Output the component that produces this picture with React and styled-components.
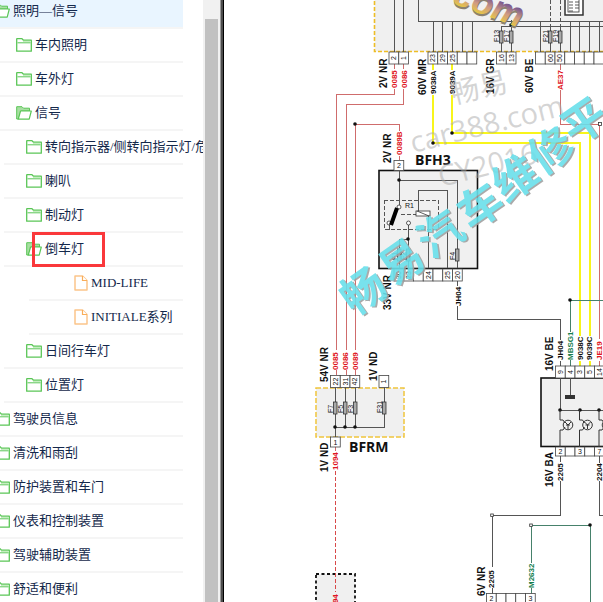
import React from "react";
import styled, { createGlobalStyle } from "styled-components";

const GlobalStyle = createGlobalStyle`
  * { box-sizing: border-box; }
  html, body, #root { height: 100%; }
  body { margin: 0; background: #fff; overflow: hidden; }
`;

const Page = styled.div`
  display: flex;
  height: 100vh;
  overflow: hidden;
`;

const Sidebar = styled.nav`
  flex: 0 0 203px;
  overflow: hidden;
`;

const Tree = styled.ul`
  list-style: none;
  margin: -5px 20px 0 0;
  padding: 0;
`;

const indents = [0, 0, 4, 29];
const iconStarts = [-6, 16, 22, 45];

const Item = styled.li`
  position: relative;
  height: 34px;
  margin-left: ${(p) => indents[p.$level]}px;
  border-bottom: 2px solid #f5f5f5;
  background: ${(p) => (p.$selected ? "#e9f5ff" : "transparent")};
`;

const ItemButton = styled.button`
  display: flex;
  align-items: center;
  gap: 3px;
  height: 31px;
  margin-left: ${(p) => iconStarts[p.$level]}px;
  padding: 0;
  border: 0;
  background: none;
  color: #14284b;
  font: 13px/18px "Liberation Serif", "Noto Sans CJK SC", serif;
  white-space: nowrap;
  cursor: pointer;
  svg { flex: none; }
`;

const Highlight = styled.span`
  position: absolute;
  left: 28px;
  top: -1px;
  width: 73px;
  height: 35px;
  border: 3px solid #fa383b;
  pointer-events: none;
`;

const Rail = styled.div`
  flex: 0 0 17px;
  display: flex;
  padding: 19px 2px 0;
  background: #f1f1f1;
`;

const Thumb = styled.div`
  flex: 1;
  background: #c1c1c1;
`;

const Divider = styled.div`
  flex: 0 0 4px;
  border-left: 1px solid #999;
  border-right: 1px solid #000;
  background: #4c4c4c;
`;

const Viewer = styled.main`
  flex: 1;
  min-width: 0;
  overflow: hidden;
  background: #fff;
`;

const Diagram = styled.svg`
  display: block;
  font-family: "Liberation Sans", sans-serif;
`;

const Wires = styled.g`
  fill: none;
  stroke: ${(p) => p.$color};
  stroke-width: ${(p) => p.$width || 1}px;
  shape-rendering: crispEdges;
`;

const Label = styled.text`
  font-size: ${(p) => p.$size}px;
  font-weight: ${(p) => (p.$bold ? 700 : 400)};
  fill: ${(p) => p.$color || "#111"};
`;

const BlockName = styled.text`
  font: 700 14px "Open Sans", sans-serif;
  fill: #111;
`;

const GreyMark = styled.text`
  font-family: "Open Sans", "Noto Sans CJK SC", sans-serif;
  font-size: ${(p) => p.$size}px;
  fill: #aaa;
  fill-opacity: 0.5;
`;

const BlueMark = styled.text`
  font: 700 44px "Noto Sans CJK SC", sans-serif;
  text-anchor: middle;
`;

const LogoText = styled.text`
  font: italic 700 35px "Liberation Sans", sans-serif;
`;

function ClosedFolder() {
  return (
    <svg width="16" height="14" viewBox="0 0 16 14" aria-hidden="true">
      <path d="M0.7 13.2V1.2Q0.7 0.7 1.2 0.7H6L7.5 2.2H15.3V13.2Z" fill="#fff" stroke="#5bc657" strokeWidth="1.3" strokeLinejoin="round" />
      <path d="M1.5 4.8H14.5" stroke="#5bc657" strokeWidth="1" />
      <path d="M7 3.5H14.5" stroke="#c5eec0" strokeWidth="1" />
    </svg>
  );
}

function OpenFolder() {
  return (
    <svg width="16" height="14" viewBox="0 0 16 14" aria-hidden="true">
      <path d="M0.7 13V0.7H6L7.5 2.2H13.5V5H5L2.5 13Z" fill="#a8dfa2" stroke="#5bc657" strokeLinejoin="round" />
      <path d="M4.5 5H15.3L13.2 13.2H2.3Z" fill="#fff" stroke="#5bc657" strokeWidth="1.2" strokeLinejoin="round" />
    </svg>
  );
}

function FileIcon() {
  return (
    <svg width="14" height="16" viewBox="0 0 14 16" aria-hidden="true">
      <path d="M1 1H8.5L13 5.5V15H1Z" fill="#fff" stroke="#fbc58a" strokeWidth="1.5" strokeLinejoin="round" />
      <path d="M8.5 1V5.5H13" fill="#fff" stroke="#f9ad59" strokeWidth="1.2" />
    </svg>
  );
}

const icons = { closed: ClosedFolder, open: OpenFolder, file: FileIcon };

const items = [
  { text: "照明—信号", level: 0, icon: "open", selected: true },
  { text: "车内照明", level: 1, icon: "closed" },
  { text: "车外灯", level: 1, icon: "closed" },
  { text: "信号", level: 1, icon: "open" },
  { text: "转向指示器/侧转向指示灯/危", level: 2, icon: "closed" },
  { text: "喇叭", level: 2, icon: "closed" },
  { text: "制动灯", level: 2, icon: "closed" },
  { text: "倒车灯", level: 2, icon: "open", marked: true },
  { text: "MID-LIFE", level: 3, icon: "file" },
  { text: "INITIALE系列", level: 3, icon: "file" },
  { text: "日间行车灯", level: 2, icon: "closed" },
  { text: "位置灯", level: 2, icon: "closed" },
  { text: "驾驶员信息", level: 0, icon: "closed" },
  { text: "清洗和雨刮", level: 0, icon: "closed" },
  { text: "防护装置和车门", level: 0, icon: "closed" },
  { text: "仪表和控制装置", level: 0, icon: "closed" },
  { text: "驾驶辅助装置", level: 0, icon: "closed" },
  { text: "舒适和便利", level: 0, icon: "closed" },
];

/* Text that reads upward, starting at (x, y). */
function Up({ x, y, size = 8, bold = true, color, children }) {
  return (
    <Label $size={size} $bold={bold} $color={color} transform={`translate(${x} ${y}) rotate(-90)`}>
      {children}
    </Label>
  );
}

/* A row of connector pins; each name is written in its own cell. */
function Pins({ x, y, h = 12, names, flat }) {
  const pitch = 9.75;
  return (
    <g>
      {names.map((n, i) => (
        <g key={i}>
          <rect x={x + i * pitch} y={y} width={pitch} height={h} fill="#fff" stroke="#444" strokeWidth="0.8" />
          {flat ? (
            <Label $size={7} x={x + i * pitch + 3} y={y + h - 2.5}>{n}</Label>
          ) : (
            <Up x={x + i * pitch + 7.4} y={y + h - (n.length > 1 ? 2 : 4)} size={7} bold={false}>{n}</Up>
          )}
        </g>
      ))}
    </g>
  );
}

function Fuse({ x, y, name }) {
  return (
    <g>
      <rect x={x - 1.5} y={y} width="3.5" height="12" fill="#aaa" stroke="#333" strokeWidth="0.8" />
      <Up x={x - 2.5} y={y + 11} size={7} bold={false}>{name}</Up>
    </g>
  );
}

function Lamp({ x }) {
  return (
    <g fill="none" stroke="#333" strokeWidth="1">
      <path d={`M${x} 410V420H${x + 3}L${x + 5} 423M${x} 447V430H${x + 3}L${x + 5} 427`} />
      <circle cx={x + 8} cy="425" r="4.8" />
      <path d={`M${x + 5} 422L${x + 8} 425L${x + 11} 422M${x + 8} 425V429M${x + 6} 425H${x + 10}`} />
    </g>
  );
}

const dots = [
  [355, 124], [433, 143], [452, 133], [570, 300], [590, 525],
  [399, 180], [408, 239], [335, 427], [345, 427], [355, 427],
  [560, 410], [580, 410], [599, 410], [511, 25],
];

const red = "#e01522";
const green = "#16804f";

const blueMarks = [
  ["畅", 363, 291], ["易", 401, 262], ["汽", 440, 234], ["车", 480, 206],
  ["维", 515, 178], ["修", 551, 150], ["平", 584, 121], ["台", 627, 92],
];

function WiringDiagram() {
  return (
    <Diagram width="379" height="602" viewBox="224 0 379 602" role="img" aria-label="Wiring diagram">
      <defs>
        <linearGradient id="logo" x1="0" y1="0" x2="0" y2="1">
          <stop offset="0.35" stopColor="#79598f" />
          <stop offset="0.6" stopColor="#d09a83" />
          <stop offset="0.85" stopColor="#e8cb40" />
        </linearGradient>
      </defs>

      <rect x="374.5" y="-4" width="240" height="55.5" fill="#f0f0f0" stroke="#edbd26" strokeWidth="1.6" strokeDasharray="4 2" />
      <rect x="316" y="388" width="88" height="49" fill="#f0f0f0" stroke="#f0c53c" strokeWidth="1.5" strokeDasharray="5 2" />
      <rect x="379" y="170.5" width="98.5" height="98" fill="#f0f0f0" stroke="#111" strokeWidth="1.6" />
      <rect x="541" y="378" width="80" height="68.5" fill="#f0f0f0" stroke="#111" strokeWidth="1.6" />
      <rect x="316" y="574" width="39" height="40" fill="#f0f0f0" stroke="#111" strokeWidth="1.8" strokeDasharray="3 2.5" />

      <Wires $color="#555">
        <path d="M394 0V52M403 0V52M418 0V21H603M433 21V52M442 21V52M452 21V52M462 21V52M472 21V52" />
        <path d="M501 52V26H603M511 20V52M540 21V52M550 26V52M560 26V52M570 21V52M579 21V52M589 21V52M599 21V52" />
        <path d="M550 0V26M560 0V26" strokeDasharray="4 2" />
        <path d="M399 170V205M399 180H457V268M418 211V190H447V268M428 216V268M389 225V230M408 225V268M399 268V239H408" />
        <path d="M384 200H438V229H384ZM401 214H416" strokeDasharray="4 2" />
        <path d="M335 387V437M345 387V427M355 387V427M384 387V427H335" />
        <path d="M457 281V286M457 306V319H560V340M560 361V410H603M570 378V395" />
        <path d="M560 456V462M560 481V515H492V567M492 588V594M599 456V463M599 481V515H603" />
      </Wires>
      <Wires $color="#cf6c6c">
        <path d="M394 64V69M394 89V94H336V350M403 64V69M403 89V104H346V350M399 131V124H355V350M399 156V160" />
        <path d="M336 370V375M346 370V375M355 370V375M560 64V70M560 90V124H599V339M599 361V366M335 446V451" />
      </Wires>
      <Wires $color="#d84a4a">
        <path d="M335 471V592" strokeDasharray="4 2" />
      </Wires>
      <Wires $color="#f8f51b" $width={2}>
        <path d="M433 64V70M433 95V143H580V336M580 361V366M452 64V70M452 95V133H590V336M590 361V366" />
      </Wires>
      <Wires $color="#46816b">
        <path d="M603 300H570V332M570 360V366M531 525H590V602M531 525V563M531 588V594" />
      </Wires>

      <g fill="#fff" stroke="#333" strokeWidth="0.8">
        <circle cx="399" cy="207" r="2" />
        <circle cx="389" cy="223" r="2" />
        <circle cx="408.5" cy="223" r="2" />
        <rect x="416" y="211" width="14" height="5" />
        <path d="M417 211L429 216" />
        <rect x="490.7" y="514" width="2.6" height="2.6" />
        <rect x="529.7" y="524" width="2.6" height="2.6" />
        <rect x="598.5" y="122.5" width="3" height="3" />
        <rect x="565" y="-2" width="18" height="17" strokeWidth="1.5" />
        <rect x="568" y="-2" width="11" height="14" />
        <path d="M569 2H573M569 5H573M569 8H573M569 11H573M575 2H579M575 5H579M575 8H579" />
      </g>
      <path d="M397 208L391 225" stroke="#000" strokeWidth="4" />
      <path d="M565 395H575V399H565Z" fill="#333" />
      {dots.map(([x, y]) => <circle key={`${x}-${y}`} cx={x} cy={y} r="1.8" fill="#111" />)}

      <Fuse x={501} y={31} name="F13" />
      <Fuse x={511} y={31} name="F17" />
      <Fuse x={550} y={31} name="F21" />
      <Fuse x={560} y={31} name="F19" />
      <Fuse x={399} y={249} name="F1" />
      <Fuse x={408} y={249} name="F2" />
      <Fuse x={457} y={249} name="F4" />
      <Fuse x={335} y={402} name="F7" />
      <Fuse x={345} y={402} name="F5" />
      <Fuse x={355} y={402} name="F3" />
      <Fuse x={384} y={402} name="F31" />
      <Lamp x={560} />
      <Lamp x={579.5} />
      <Lamp x={599} />

      <Pins x={389} y={52} names={["2", "1"]} />
      <Pins x={428} y={52} names={["23", "29", "25", "", ""]} />
      <Pins x={496.5} y={52} names={["16", "13"]} />
      <Pins x={535.5} y={52} names={["", "60", "50", "", "", "", ""]} />
      <Pins x={394} y={160.5} h={10} names={["2"]} flat />
      <Pins x={394} y={269} names={["30", "23", "", "24", "", "25", "20"]} />
      <Pins x={330.5} y={375.5} names={["22", "31", "42"]} />
      <Pins x={379} y={375.5} names={["1"]} />
      <Pins x={330.5} y={437} h={10} names={["1"]} flat />
      <Pins x={555.5} y={366} names={["9", "4", "3", "5", "14"]} />
      <Pins x={555.5} y={447} h={9} names={["2", "", "3", "", "7"]} flat />
      <Pins x={486.5} y={593.5} h={10} names={["2", "", "", "", "3"]} flat />

      <Up x={387} y={88} size={10}>2V NR</Up>
      <Up x={426} y={95} size={10}>60V MR</Up>
      <Up x={494} y={94} size={10}>16V GR</Up>
      <Up x={533} y={93} size={10}>60V BE</Up>
      <Up x={391} y={163} size={10}>2V NR</Up>
      <Up x={391} y={310} size={10}>33V NR</Up>
      <Up x={328} y={382} size={10}>54V NR</Up>
      <Up x={377} y={381} size={10}>1V ND</Up>
      <Up x={328} y={472} size={10}>1V ND</Up>
      <Up x={553} y={371} size={10}>16V BE</Up>
      <Up x={553} y={487} size={10}>16V BA</Up>
      <Up x={485} y={596} size={10}>6V NR</Up>

      <Up x={397} y={88} color={red}>0085</Up>
      <Up x={407} y={88} color={red}>0086</Up>
      <Up x={402} y={155} color={red}>0089B</Up>
      <Up x={338} y={370} color={red}>0085</Up>
      <Up x={348} y={370} color={red}>0086</Up>
      <Up x={358} y={370} color={red}>0089</Up>
      <Up x={338} y={470} color={red}>1094</Up>
      <Up x={338} y={612} color={red}>1094</Up>
      <Up x={563} y={90} color={red}>AE37</Up>
      <Up x={602} y={360} color={red}>JE19</Up>
      <Up x={436} y={94}>9038A</Up>
      <Up x={455} y={94}>9039A</Up>
      <Up x={461} y={306}>JH04</Up>
      <Up x={563} y={360}>JH04</Up>
      <Up x={573} y={360} color={green}>MBSG1</Up>
      <Up x={583} y={360}>9038C</Up>
      <Up x={592} y={360}>9039C</Up>
      <Up x={563} y={481}>2205</Up>
      <Up x={602} y={481}>2204</Up>
      <Up x={494} y={588}>2205</Up>
      <Up x={534} y={588} color={green}>M2632</Up>
      <Label $size={7} x="405" y="208">R1</Label>
      <BlockName x="415" y="165">BFH3</BlockName>
      <BlockName x="349" y="452">BFRM</BlockName>

      <GreyMark $size={29} transform="translate(453 104) rotate(-13)">畅易</GreyMark>
      <GreyMark $size={29} transform="translate(413 153) rotate(-14)">car388.com</GreyMark>
      <GreyMark $size={29} transform="translate(441 187) rotate(-14)">CY2016</GreyMark>

      <g opacity="0.9">
        {blueMarks.map(([char, x, y]) => (
          <g key={char} transform={`translate(${x} ${y}) rotate(-35)`}>
            <BlueMark x="1" y="18" fill="#a1a1a1">{char}</BlueMark>
            <BlueMark x="0" y="16" fill="#69dfea">{char}</BlueMark>
          </g>
        ))}
      </g>
      <g transform="translate(451 3) rotate(20)">
        <LogoText x="1" y="2" fill="#8b8270">com</LogoText>
        <LogoText x="0" y="0" fill="url(#logo)">com</LogoText>
      </g>
    </Diagram>
  );
}

export default function App() {
  return (
    <>
      <GlobalStyle />
      <Page>
        <Sidebar>
          <Tree>
            {items.map(({ text, level, icon, selected, marked }) => {
              const Icon = icons[icon];
              return (
                <Item key={text} $level={level} $selected={selected}>
                  <ItemButton type="button" $level={level}>
                    <Icon />
                    {text}
                  </ItemButton>
                  {marked && <Highlight />}
                </Item>
              );
            })}
          </Tree>
        </Sidebar>
        <Rail><Thumb /></Rail>
        <Divider />
        <Viewer><WiringDiagram /></Viewer>
      </Page>
    </>
  );
}
